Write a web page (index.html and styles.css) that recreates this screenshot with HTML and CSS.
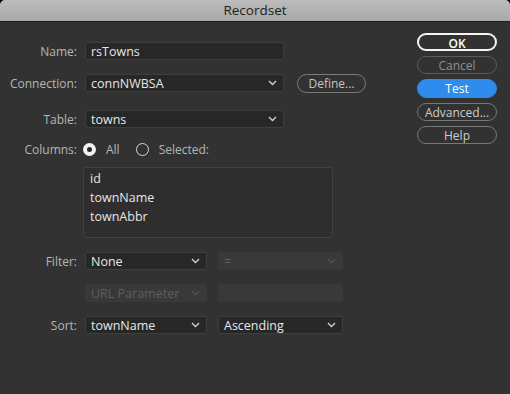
FILE: index.html
```html
<!DOCTYPE html>
<html lang="en">

<head>
    <meta charset="UTF-8">
    <meta name="viewport" content="width=device-width, initial-scale=1.0">
    <title>Recordset</title>
    <link rel="stylesheet" href="styles.css">
</head>

<body>
    <div class="window">
        <div class="titlebar">Recordset</div>

        <div class="content">
            <div class="form">
                <!-- Name -->
                <div class="row">
                    <span class="label">Name:</span>
                    <div class="field w-wide">rsTowns</div>
                </div>

                <!-- Connection -->
                <div class="row">
                    <span class="label">Connection:</span>
                    <div class="field select w-wide">
                        <span>connNWBSA</span>
                        <svg class="chevron" width="9" height="6" viewBox="0 0 9 6"><path d="M1 1l3.5 3.5L8 1" /></svg>
                    </div>
                    <button class="pill define">Define...</button>
                </div>

                <!-- Table -->
                <div class="row row-table">
                    <span class="label">Table:</span>
                    <div class="field select w-wide">
                        <span>towns</span>
                        <svg class="chevron" width="9" height="6" viewBox="0 0 9 6"><path d="M1 1l3.5 3.5L8 1" /></svg>
                    </div>
                </div>

                <!-- Columns -->
                <div class="row row-columns">
                    <span class="label">Columns:</span>
                    <span class="radio checked"></span>
                    <span class="radio-text">All</span>
                    <span class="radio"></span>
                    <span class="radio-text">Selected:</span>
                </div>

                <div class="row row-list">
                    <span class="label"></span>
                    <div class="list">
                        <div>id</div>
                        <div>townName</div>
                        <div>townAbbr</div>
                    </div>
                </div>

                <!-- Filter -->
                <div class="row">
                    <span class="label">Filter:</span>
                    <div class="field select w-half">
                        <span>None</span>
                        <svg class="chevron" width="9" height="6" viewBox="0 0 9 6"><path d="M1 1l3.5 3.5L8 1" /></svg>
                    </div>
                    <div class="field select disabled w-half2">
                        <span>=</span>
                        <svg class="chevron" width="9" height="6" viewBox="0 0 9 6"><path d="M1 1l3.5 3.5L8 1" /></svg>
                    </div>
                </div>

                <div class="row">
                    <span class="label"></span>
                    <div class="field select disabled w-half">
                        <span>URL Parameter</span>
                        <svg class="chevron" width="9" height="6" viewBox="0 0 9 6"><path d="M1 1l3.5 3.5L8 1" /></svg>
                    </div>
                    <div class="field disabled w-half2"></div>
                </div>

                <!-- Sort -->
                <div class="row">
                    <span class="label">Sort:</span>
                    <div class="field select w-half">
                        <span>townName</span>
                        <svg class="chevron" width="9" height="6" viewBox="0 0 9 6"><path d="M1 1l3.5 3.5L8 1" /></svg>
                    </div>
                    <div class="field select w-half2">
                        <span>Ascending</span>
                        <svg class="chevron" width="9" height="6" viewBox="0 0 9 6"><path d="M1 1l3.5 3.5L8 1" /></svg>
                    </div>
                </div>
            </div>

            <div class="actions">
                <button class="pill btn primary">OK</button>
                <button class="pill btn muted">Cancel</button>
                <button class="pill btn blue">Test</button>
                <button class="pill btn">Advanced...</button>
                <button class="pill btn">Help</button>
            </div>
        </div>
    </div>
</body>

</html>
```

FILE: styles.css
```css
html,
body {
    margin: 0;
    padding: 0;
    background-color: #000000;
}

body {
    font-family: "Open Sans", "Liberation Sans", sans-serif;
    font-size: 12px;
}

.window {
    width: 510px;
    height: 394px;
    background-color: #323232;
    border-radius: 5px 5px 0 0;
    overflow: hidden;
}

.titlebar {
    height: 21px;
    line-height: 21px;
    text-align: center;
    font-size: 13.5px;
    color: #1c1c1c;
    background: linear-gradient(#bcbcbc, #a9a9a9);
    border-bottom: 1px solid #1e1e1e;
}

.content {
    display: flex;
}

.form {
    flex: 1;
    display: flex;
    flex-direction: column;
    gap: 14px;
    padding-top: 20px;
}

.row {
    display: flex;
    align-items: center;
    height: 18px;
}

.row-table {
    margin-top: 4px;
}

.row-columns {
    margin-top: -2px;
}

.row-list {
    height: auto;
    margin-top: -5px;
    align-items: flex-start;
}

.label {
    width: 77px;
    flex-shrink: 0;
    text-align: right;
    color: #b6b6b6;
    margin-right: 8px;
}

.field {
    box-sizing: border-box;
    height: 18px;
    display: flex;
    align-items: center;
    justify-content: space-between;
    padding: 0 6px 0 5px;
    background-color: #272727;
    border: 1px solid #3e3e3e;
    border-radius: 3px;
    color: #e6e6e6;
    font-size: 12.5px;
}

.w-wide {
    width: 199px;
}

.w-half {
    width: 122px;
}

.w-half2 {
    width: 125px;
    margin-left: 11px;
}

.chevron {
    fill: none;
    stroke: #d0d0d0;
    stroke-width: 1.4;
}

.field.disabled {
    background-color: #393939;
    border-color: #393939;
    color: #5e5e5e;
}

.field.disabled .chevron {
    stroke: #525252;
}

.pill {
    box-sizing: border-box;
    font-family: inherit;
    font-size: 12px;
    background: transparent;
    border: 1px solid #7c7c7c;
    border-radius: 10px;
    color: #c4c4c4;
    padding: 0;
    cursor: pointer;
}

.define {
    width: 69px;
    height: 19px;
    margin-left: 13px;
}

.radio {
    box-sizing: border-box;
    width: 13px;
    height: 13px;
    border-radius: 50%;
    border: 1.5px solid #d8d8d8;
    margin-left: -2px;
}

.radio.checked {
    border: 4px solid #f2f2f2;
    background-color: #2a2a2a;
}

.radio-text {
    color: #b6b6b6;
    margin-left: 10px;
    margin-right: 18px;
}

.list {
    box-sizing: border-box;
    width: 250px;
    height: 71px;
    margin-left: -2px;
    padding: 1px 6px;
    background-color: #2e2e2e;
    border: 1px solid #424242;
    border-radius: 3px;
    color: #e6e6e6;
    font-size: 12.5px;
    line-height: 19px;
}

.actions {
    width: 80px;
    margin: 11px 13px 0 0;
    display: flex;
    flex-direction: column;
    gap: 5px;
}

.btn {
    height: 18px;
    width: 80px;
    border-color: #777777;
    color: #cdcdcd;
}

.btn.primary {
    border: 2px solid #f4f4f4;
    color: #ffffff;
    font-weight: 600;
}

.btn.muted {
    border-color: #5c5c5c;
    color: #8e8e8e;
}

.btn.blue {
    background-color: #2e8cec;
    border-color: #2e8cec;
    color: #ffffff;
    height: 19px;
}
```
